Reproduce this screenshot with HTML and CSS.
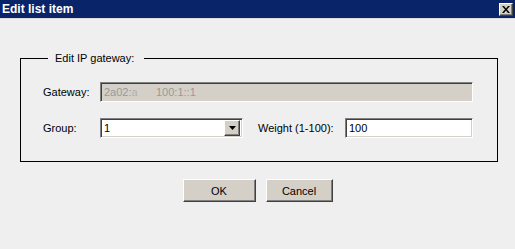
FILE: index.html
```
<!DOCTYPE html>
<html lang="en">

<head>
    <meta charset="UTF-8">
    <title>Edit list item</title>
    <link rel="stylesheet" href="styles.css">
</head>

<body>
    <div class="titlebar">
        <span class="title">Edit list item</span>
        <button class="close-btn">
            <svg width="8" height="7" viewBox="0 0 8 7">
                <path d="M0 0h2l2 2.5L6 0h2L5 3.5 8 7H6L4 4.5 2 7H0l3-3.5z" fill="#000"/>
            </svg>
        </button>
    </div>

    <div class="content">
        <fieldset class="group-box">
            <legend>Edit IP gateway:</legend>
            <div class="row row-first">
                <label class="label">Gateway:</label>
                <div class="field field-disabled">2a02:<span class="faded">a</span>&nbsp;&nbsp;&nbsp;&nbsp;&nbsp;&nbsp;100:1::1</div>
            </div>
            <div class="row">
                <label class="label">Group:</label>
                <div class="field combo">
                    <span class="combo-value">1</span>
                    <span class="combo-btn">
                        <svg width="7" height="4" viewBox="0 0 7 4"><path d="M0 0h7L3.5 4z" fill="#000"/></svg>
                    </span>
                </div>
                <label class="label label-weight">Weight (1-100):</label>
                <div class="field field-weight">100</div>
            </div>
        </fieldset>

        <div class="actions">
            <button class="btn btn-ok">OK</button>
            <button class="btn btn-cancel">Cancel</button>
        </div>
    </div>
</body>

</html>
```

FILE: styles.css
```
body {
    margin: 0;
    background-color: #efefef;
    font-family: "Liberation Sans", Arial, sans-serif;
    font-size: 11px;
    color: #000;
}

.titlebar {
    height: 18px;
    background-color: #0a246a;
    border-bottom: 1px solid #dcdcdc;
    display: flex;
    align-items: center;
    justify-content: space-between;
    padding: 0 2px 0 2px;
}
.title {
    color: white;
    font-weight: bold;
    font-size: 12px;
}
.close-btn {
    width: 14px;
    height: 13px;
    margin-top: 0;
    padding: 0;
    background-color: #d4d0c8;
    border: 1px solid;
    border-color: #fff #404040 #404040 #fff;
    box-shadow: inset -1px -1px #808080;
    display: flex;
    align-items: center;
    justify-content: center;
}

.content {
    padding-top: 33px;
}

.group-box {
    margin: 0 17px 0 20px;
    border: 1px solid #000;
    padding: 17px 0 23px 22px;
}
.group-box legend {
    margin-left: 5px;
    padding: 0 10px 0 7px;
    line-height: 13px;
}

.row {
    display: flex;
    align-items: center;
}
.row-first {
    margin-bottom: 16px;
}
.label {
    width: 57px;
}
.label-weight {
    width: 87px;
    margin-left: 15px;
}

.field {
    box-sizing: border-box;
    height: 20px;
    border: 1px solid;
    border-color: #808080 #fff #fff #808080;
    box-shadow: inset 1px 1px #404040, inset -1px -1px #d4d0c8;
    background-color: white;
    padding: 0 3px;
    line-height: 18px;
    white-space: nowrap;
}
.field-disabled {
    width: 373px;
    background-color: #d4d0c8;
    color: #999;
}
.faded {
    color: #b0b0b0;
}
.combo {
    width: 143px;
    display: flex;
    justify-content: space-between;
    padding-right: 2px;
}
.combo-btn {
    box-sizing: border-box;
    width: 16px;
    height: 16px;
    margin-top: 1px;
    background-color: #d4d0c8;
    border: 1px solid;
    border-color: #fff #404040 #404040 #fff;
    box-shadow: inset -1px -1px #808080;
    display: flex;
    align-items: center;
    justify-content: center;
}
.field-weight {
    width: 128px;
}

.actions {
    display: flex;
    justify-content: center;
    gap: 10px;
    margin-top: 17px;
}
.btn {
    height: 23px;
    background-color: #d4d0c8;
    border: 1px solid;
    border-color: #fff #404040 #404040 #fff;
    box-shadow: inset -1px -1px #808080;
    font-family: "Liberation Sans", Arial, sans-serif;
    font-size: 11px;
    color: #000;
    padding: 0;
}
.btn-ok {
    width: 73px;
}
.btn-cancel {
    width: 67px;
}
```
